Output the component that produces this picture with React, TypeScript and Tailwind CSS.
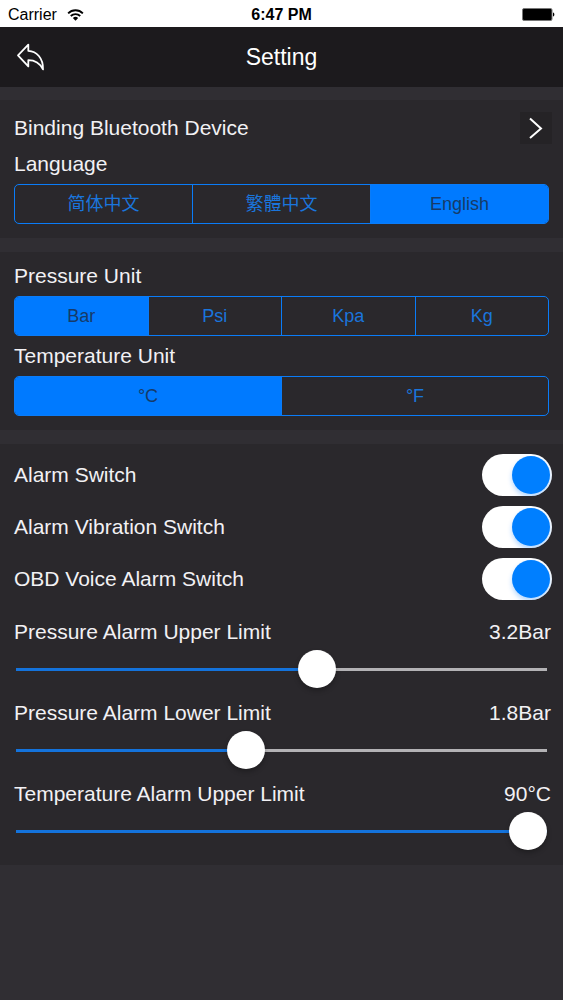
import { useState } from "react";

type SegmentedProps = {
  label: string;
  options: string[];
  initial: number;
};

function Segmented({ label, options, initial }: SegmentedProps) {
  const [selected, setSelected] = useState(initial);

  return (
    <div
      role="group"
      aria-label={label}
      className="mx-3.5 flex h-10 divide-x divide-[#0a7cf8] overflow-hidden rounded-[5px] border border-[#0a7cf8]"
    >
      {options.map((option, i) => (
        <button
          key={option}
          type="button"
          aria-pressed={selected === i}
          onClick={() => setSelected(i)}
          className={`flex-1 text-lg leading-none ${
            selected === i ? "bg-[#007aff] text-[#173a68]" : "text-[#1a75dc]"
          }`}
        >
          {option}
        </button>
      ))}
    </div>
  );
}

function SectionLabel({ children }: { children: string }) {
  return <h2 className="flex h-10 items-center px-3.5">{children}</h2>;
}

function SwitchRow({ id, label }: { id: string; label: string }) {
  return (
    <div className="flex h-[52px] items-center justify-between pl-3.5 pr-[11px]">
      <label htmlFor={id}>{label}</label>
      <input
        id={id}
        type="checkbox"
        role="switch"
        defaultChecked
        className="h-[42px] w-[70px] appearance-none overflow-hidden rounded-full bg-[#8e8e93] p-0.5 checked:bg-white before:block before:size-[38px] before:rounded-full before:bg-white before:shadow-[0_3px_5px_rgba(0,122,255,0.3)] before:transition-transform checked:before:translate-x-7 checked:before:bg-[#007fff]"
      />
    </div>
  );
}

type SliderRowProps = {
  id: string;
  label: string;
  unit: string;
  max: number;
  step: number;
  initial: number;
  digits: number;
};

function SliderRow({ id, label, unit, max, step, initial, digits }: SliderRowProps) {
  const [value, setValue] = useState(initial);
  const percent = (value / max) * 100;

  return (
    <div>
      <div className="flex h-[42px] items-center justify-between pl-3.5 pr-3">
        <label htmlFor={id}>{label}</label>
        <output htmlFor={id}>
          {value.toFixed(digits)}
          {unit}
        </output>
      </div>
      <div className="px-4">
        <input
          id={id}
          type="range"
          min={0}
          max={max}
          step={step}
          value={value}
          onChange={(e) => setValue(Number(e.target.value))}
          style={{
            backgroundImage: `linear-gradient(to right, #1473dc ${percent}%, #b3b2b5 ${percent}%)`,
          }}
          className="block h-8 w-full appearance-none bg-[length:100%_3px] bg-center bg-no-repeat [&::-webkit-slider-thumb]:size-[38px] [&::-webkit-slider-thumb]:appearance-none [&::-webkit-slider-thumb]:rounded-full [&::-webkit-slider-thumb]:bg-white [&::-webkit-slider-thumb]:shadow-[0_3px_5px_rgba(0,0,0,0.25)]"
        />
      </div>
    </div>
  );
}

export default function App() {
  return (
    <div className="flex min-h-screen flex-col bg-[#302e33] font-['Liberation_Sans','Noto_Sans_CJK_SC',sans-serif] text-[21px] leading-6 text-[#f2f1f4]">
      {/* Status bar */}
      <div className="grid h-[27px] grid-cols-3 items-center bg-white px-2 pt-0.5 text-base text-black">
        <div className="flex items-center gap-2.5">
          <span>Carrier</span>
          <svg className="h-3 w-[17px]" viewBox="0 0 18 12" fill="none" stroke="currentColor">
            <path d="M1.2 4.2a11 11 0 0 1 15.6 0" strokeWidth="2" />
            <path d="M4 7.1a7.1 7.1 0 0 1 10 0" strokeWidth="2" />
            <path d="M9 12 6.2 9.3a4 4 0 0 1 5.6 0z" fill="currentColor" stroke="none" />
          </svg>
        </div>
        <span className="text-center font-bold">6:47 PM</span>
        <svg className="h-[13px] w-[33px] justify-self-end" viewBox="0 0 33 13">
          <rect x="0.5" y="0.5" width="29.5" height="12" rx="1.5" fill="#000" stroke="#777" />
          <path d="M31 4.5c1.8.3 1.8 3.7 0 4z" fill="#000" />
        </svg>
      </div>

      {/* Title bar */}
      <header className="grid h-[60px] grid-cols-3 items-center bg-[#1c1a1d] px-4">
        <button type="button" aria-label="Back" className="justify-self-start">
          <svg
            className="h-[30px] w-[30px]"
            viewBox="0 0 30 30"
            fill="none"
            stroke="#fff"
            strokeWidth="1.8"
            strokeLinejoin="round"
          >
            <path d="M2 13.3 12.3 2.6v6.2C20.5 9.2 27.4 16 27 27.4 24 21.4 19.5 18.2 12.3 18.2v6.2z" />
          </svg>
        </button>
        <h1 className="text-center text-[23px] text-white">Setting</h1>
      </header>

      <main className="flex flex-col gap-3.5 pt-[13px]">
        <section className="bg-[#2a282c] pt-3 pb-3.5">
          <div className="flex h-8 items-center justify-between pl-3.5 pr-[11px]">
            <span>Binding Bluetooth Device</span>
            <button
              type="button"
              aria-label="Open Bluetooth devices"
              className="flex size-8 items-center justify-center bg-[#252326]"
            >
              <svg className="h-[22px] w-[14px]" viewBox="0 0 14 22" fill="none" stroke="#fff" strokeWidth="2">
                <path d="M1 1.5 12 11.5 1 21" />
              </svg>
            </button>
          </div>
          <SectionLabel>Language</SectionLabel>
          <Segmented label="Language" options={["简体中文", "繁體中文", "English"]} initial={2} />
        </section>

        <section className="bg-[#2a282c] pt-1 pb-3.5">
          <SectionLabel>Pressure Unit</SectionLabel>
          <Segmented label="Pressure Unit" options={["Bar", "Psi", "Kpa", "Kg"]} initial={0} />
          <SectionLabel>Temperature Unit</SectionLabel>
          <Segmented label="Temperature Unit" options={["°C", "°F"]} initial={0} />
        </section>

        <section className="bg-[#2a282c] pt-[5px] pb-[18px]">
          <SwitchRow id="alarm" label="Alarm Switch" />
          <SwitchRow id="vibration" label="Alarm Vibration Switch" />
          <SwitchRow id="voice" label="OBD Voice Alarm Switch" />
          <div className="flex flex-col gap-[7px] pt-1.5">
            <SliderRow id="pressure-upper" label="Pressure Alarm Upper Limit" unit="Bar" max={5.6} step={0.1} initial={3.2} digits={1} />
            <SliderRow id="pressure-lower" label="Pressure Alarm Lower Limit" unit="Bar" max={4.2} step={0.1} initial={1.8} digits={1} />
            <SliderRow id="temperature-upper" label="Temperature Alarm Upper Limit" unit="°C" max={90} step={1} initial={90} digits={0} />
          </div>
        </section>
      </main>
    </div>
  );
}
